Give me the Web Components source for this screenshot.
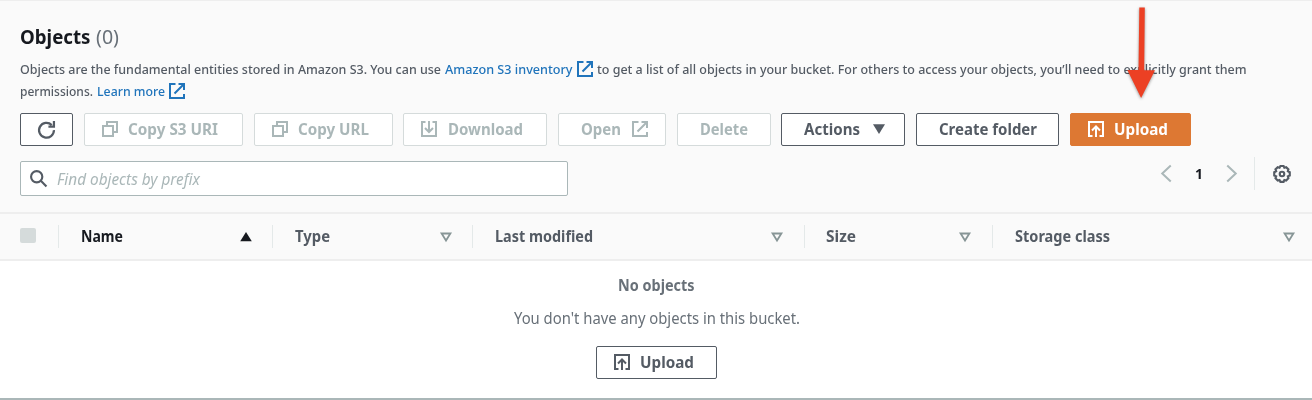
<!DOCTYPE html>
<html lang="en"><head><meta charset="utf-8"><title>Objects</title>
<style>html,body{margin:0;background:#fff}body{width:1312px;height:400px;overflow:hidden;font-family:"Noto Sans","Open Sans",sans-serif}</style></head>
<body><s3-objects></s3-objects>
<script>
const define=(name,html,init)=>customElements.define(name,class extends HTMLElement{
  connectedCallback(){
    if(this.shadowRoot)return;
    const t=document.createElement('template');t.innerHTML=html;
    this.attachShadow({mode:'open'}).append(t.content.cloneNode(true));
    if(init)init(this,this.shadowRoot);
  }
});
// Text condensed or widened to a given advance width.
define('fit-text','<style>:host{display:inline-block;white-space:nowrap;flex:none}span{display:inline-block;transform-origin:0 50%}</style><span><slot></slot></span>',(h,r)=>{
  const s=r.querySelector('span'),w=+h.getAttribute('w');
  h.style.width=w+'px';
  s.style.transform='scaleX('+w/s.getBoundingClientRect().width+')';
});
const ICONS={
  refresh:'<path d="M12.9 3.7A7 7 0 1 0 15 8.6M15 0v5.3H9.8"/>',
  copy:'<path d="M1 5h10v10H1zM5 5V1h10v10h-4"/>',
  download:'<path d="M4.500 1H1v14h14V1h-3.500M8 0v10.500M4 7l4 4 4-4"/>',
  external:'<path d="M6.500 1H1v14h14v-4M9.500 1H15v6M14.500 1.500L5.500 10.500"/>',
  upload:'<path d="M4.500 15H1V1h14v14h-3.500M8 16V6M4 9.500l4-4 4 4"/>',
  search:'<circle cx="6.300" cy="6.300" r="5.300"/><path d="M10.200 10.200L15.500 15.500"/>',
  left:'<path d="M12 .5L4 8l8 7.500"/>',
  right:'<path d="M4 .5L12 8l-8 7.500"/>',
  caret:'<path fill="currentColor" stroke="none" d="M2 3.300h12L8 13z"/>',
  up:'<path fill="currentColor" stroke="none" d="M2.200 12.200L8 3l5.800 9.200z"/>',
  down:'<path d="M3.600 4.500h8.800L8 11.500z"/>',
  gear:'<path d="M6.600.900h2.800l.7 1.500 1.600-.5 2 2-.5 1.600 1.700.9v3l-1.700.7.5 1.700-2 2-1.600-.5-.7 1.700H6.600l-.8-1.700-1.600.5-2-2 .6-1.700-1.700-.7v-3l1.700-.9-.6-1.600 2-2 1.600.5z"/><circle cx="8" cy="8" r="2"/>'
};
define('ui-icon','<style>:host{display:inline-block;flex:none;width:16px;height:16px}svg{display:block;width:100%;height:100%;overflow:visible;fill:none;stroke:currentColor}</style><svg viewBox="0 0 16 16"></svg>',(h,r)=>{
  const s=r.querySelector('svg');s.innerHTML=ICONS[h.getAttribute('name')];
  s.style.strokeWidth=h.getAttribute('stroke')||2;
  const z=h.getAttribute('size');if(z)h.style.width=h.style.height=z+'px';
});
define('ui-button',`<style>:host{display:block;flex:none;color:#545b64;font-weight:700;font-size:15.300px}
button{all:unset;box-sizing:border-box;width:100%;height:33px;display:flex;align-items:center;justify-content:center;gap:11px;border:1px solid #545b64;border-radius:2px;background:#fff;line-height:20px}
::slotted(fit-text){margin-top:-2px}::slotted(ui-icon){margin-top:-1px}
:host([lead]) button{justify-content:flex-start;padding-left:17px;gap:10.500px}
:host([disabled]){color:#aab7b8}:host([disabled]) button{border-color:#d5dbdb}
:host([primary]){color:#fff}:host([primary]) button{background:#dd7833;border-color:#dd7833}</style><button><slot></slot></button>`,(h,r)=>{h.style.width=h.getAttribute('w')+'px'});
define('col-head',`<style>:host{box-sizing:border-box;display:flex;align-items:center;justify-content:space-between;height:23px;border-left:1px solid #e4e9e9;padding:0 18.500px 0 22px;color:#545b64;font-weight:700;font-size:15.300px;line-height:22px}
::slotted(fit-text){margin-top:-2px}
.up{display:none}ui-icon{color:#879596}:host([sorted]){color:#16191f}:host([sorted]) .down{display:none}:host([sorted]) .up{display:block;color:#16191f}</style><slot></slot><ui-icon class="down" name="down" stroke="1.800"></ui-icon><ui-icon class="up" name="up"></ui-icon>`);
define('page-nav',`<style>:host{display:flex;align-items:center;height:33px;color:#16191f;font-size:14.500px;font-weight:700}
.a{color:#aab7b8}fit-text{margin:-2px 20px 0 20px}.gear{box-sizing:border-box;height:33px;border-left:1px solid #e4e9e9;margin-left:14px;padding-left:18px;display:flex;align-items:center;color:#545b64}</style>
<ui-icon class="a" name="left" size="17" stroke="1.900"></ui-icon><fit-text w="8">1</fit-text><ui-icon class="a" name="right" size="17" stroke="1.900"></ui-icon><div class="gear"><ui-icon name="gear" size="18" stroke="1.900"></ui-icon></div>`);
define('search-box',`<style>:host{box-sizing:border-box;display:flex;align-items:center;width:548px;height:35px;border:1px solid #aab7b8;border-radius:2px;background:#fff;padding-left:9px;gap:10px;color:#aab7b8;font-size:15.800px;font-style:italic;line-height:20px}ui-icon{color:#545b64}</style><ui-icon name="search" size="17"></ui-icon><slot></slot>`);
define('pointer-arrow',`<style>:host{position:absolute;left:1120px;top:0;width:42px;height:108px;pointer-events:none}svg{display:block;filter:drop-shadow(0 1px 1.500px rgba(0,0,0,.4))}</style>
<svg width="42" height="108"><path fill="#ec4024" d="M19.300 7.500h5.500L24.200 70.300H35L21.100 98 7.300 70.100H18.500z"/></svg>`);
define('s3-objects',`<style>
:host{display:flex;flex-direction:column;position:relative;width:1312px;height:400px;box-sizing:border-box}
header{box-sizing:border-box;height:214px;background:#fafafa;border-top:1px solid #eee;border-bottom:2px solid #eee;padding:22px 21px 0 20.300px}
h1{margin:0;height:28px;font-size:20px;line-height:27px;color:#16191f;display:flex;gap:5px}h1 .n{color:#687078;font-weight:400}
.desc{margin-top:7px;font-size:12.800px;color:#545b64;font-weight:500}.line{display:flex;align-items:center;height:22px;line-height:22px}.link{color:#2074bb}
.line ui-icon{color:#2074bb;margin:0 4px 0 4px}
.bar{display:flex;gap:10.700px;margin-top:11px}
.tools{display:flex;justify-content:space-between;margin-top:15px}page-nav{margin-top:-4px}
.cols{box-sizing:border-box;flex:none;height:47px;display:grid;grid-template-columns:58px 214px 200.400px 331.600px 188px 1fr;align-items:center;background:#fafafa;border-bottom:2px solid #eee}
.check{width:15.500px;height:15.500px;border-radius:2px;background:#d5dbdb;margin-left:20.300px;margin-top:-2px}
main{flex:1;box-sizing:border-box;display:flex;flex-direction:column;align-items:center;color:#687078;font-size:15.500px;line-height:22px;padding:13px 0 0 1px;border-bottom:2px solid #aab7b8}
b{font-weight:700}.msg{margin-top:11px}main ui-button{margin-top:17px}
</style>
<header>
<h1><fit-text w="70.500">Objects</fit-text><fit-text class="n" w="23">(0)</fit-text></h1>
<div class="desc"><div class="line"><fit-text w="421">Objects are the fundamental entities stored in Amazon S3. You can use</fit-text><fit-text class="link" w="127.500" style="margin-left:4px">Amazon S3 inventory</fit-text><ui-icon name="external"></ui-icon><fit-text w="649.500">to get a list of all objects in your bucket. For others to access your objects, you’ll need to explicitly grant them</fit-text></div>
<div class="line"><fit-text w="73">permissions.</fit-text><fit-text class="link" w="68" style="margin-left:4px">Learn more</fit-text><ui-icon name="external"></ui-icon></div></div>
<div class="bar">
<ui-button w="53"><ui-icon name="refresh" size="17" stroke="2.100"></ui-icon></ui-button>
<ui-button lead disabled w="159"><ui-icon name="copy"></ui-icon><fit-text w="90">Copy S3 URI</fit-text></ui-button>
<ui-button lead disabled w="139"><ui-icon name="copy"></ui-icon><fit-text w="71">Copy URL</fit-text></ui-button>
<ui-button lead disabled w="143.500"><ui-icon name="download"></ui-icon><fit-text w="75">Download</fit-text></ui-button>
<ui-button disabled w="108.500"><fit-text w="40" style="margin-left:5px">Open</fit-text><ui-icon name="external"></ui-icon></ui-button>
<ui-button disabled w="94"><fit-text w="48">Delete</fit-text></ui-button>
<ui-button w="123.700"><fit-text w="56" style="margin-left:4px">Actions</fit-text><ui-icon name="caret" style="margin-right:-1px"></ui-icon></ui-button>
<ui-button w="143.500"><fit-text w="98">Create folder</fit-text></ui-button>
<ui-button lead primary w="121.500"><ui-icon name="upload"></ui-icon><fit-text w="54">Upload</fit-text></ui-button>
</div>
<div class="tools"><search-box><fit-text w="143">Find objects by prefix</fit-text></search-box><page-nav></page-nav></div>
</header>
<div class="cols"><div class="check"></div>
<col-head sorted><fit-text w="42">Name</fit-text></col-head><col-head><fit-text w="35">Type</fit-text></col-head><col-head><fit-text w="98">Last modified</fit-text></col-head><col-head style="padding-left:21px"><fit-text w="30">Size</fit-text></col-head><col-head style="padding-right:15.500px"><fit-text w="95">Storage class</fit-text></col-head></div>
<main><b><fit-text w="76.500">No objects</fit-text></b><fit-text class="msg" w="286">You don't have any objects in this bucket.</fit-text>
<ui-button lead w="121.500"><ui-icon name="upload"></ui-icon><fit-text w="54">Upload</fit-text></ui-button></main>
<pointer-arrow></pointer-arrow>`);
</script></body></html>
